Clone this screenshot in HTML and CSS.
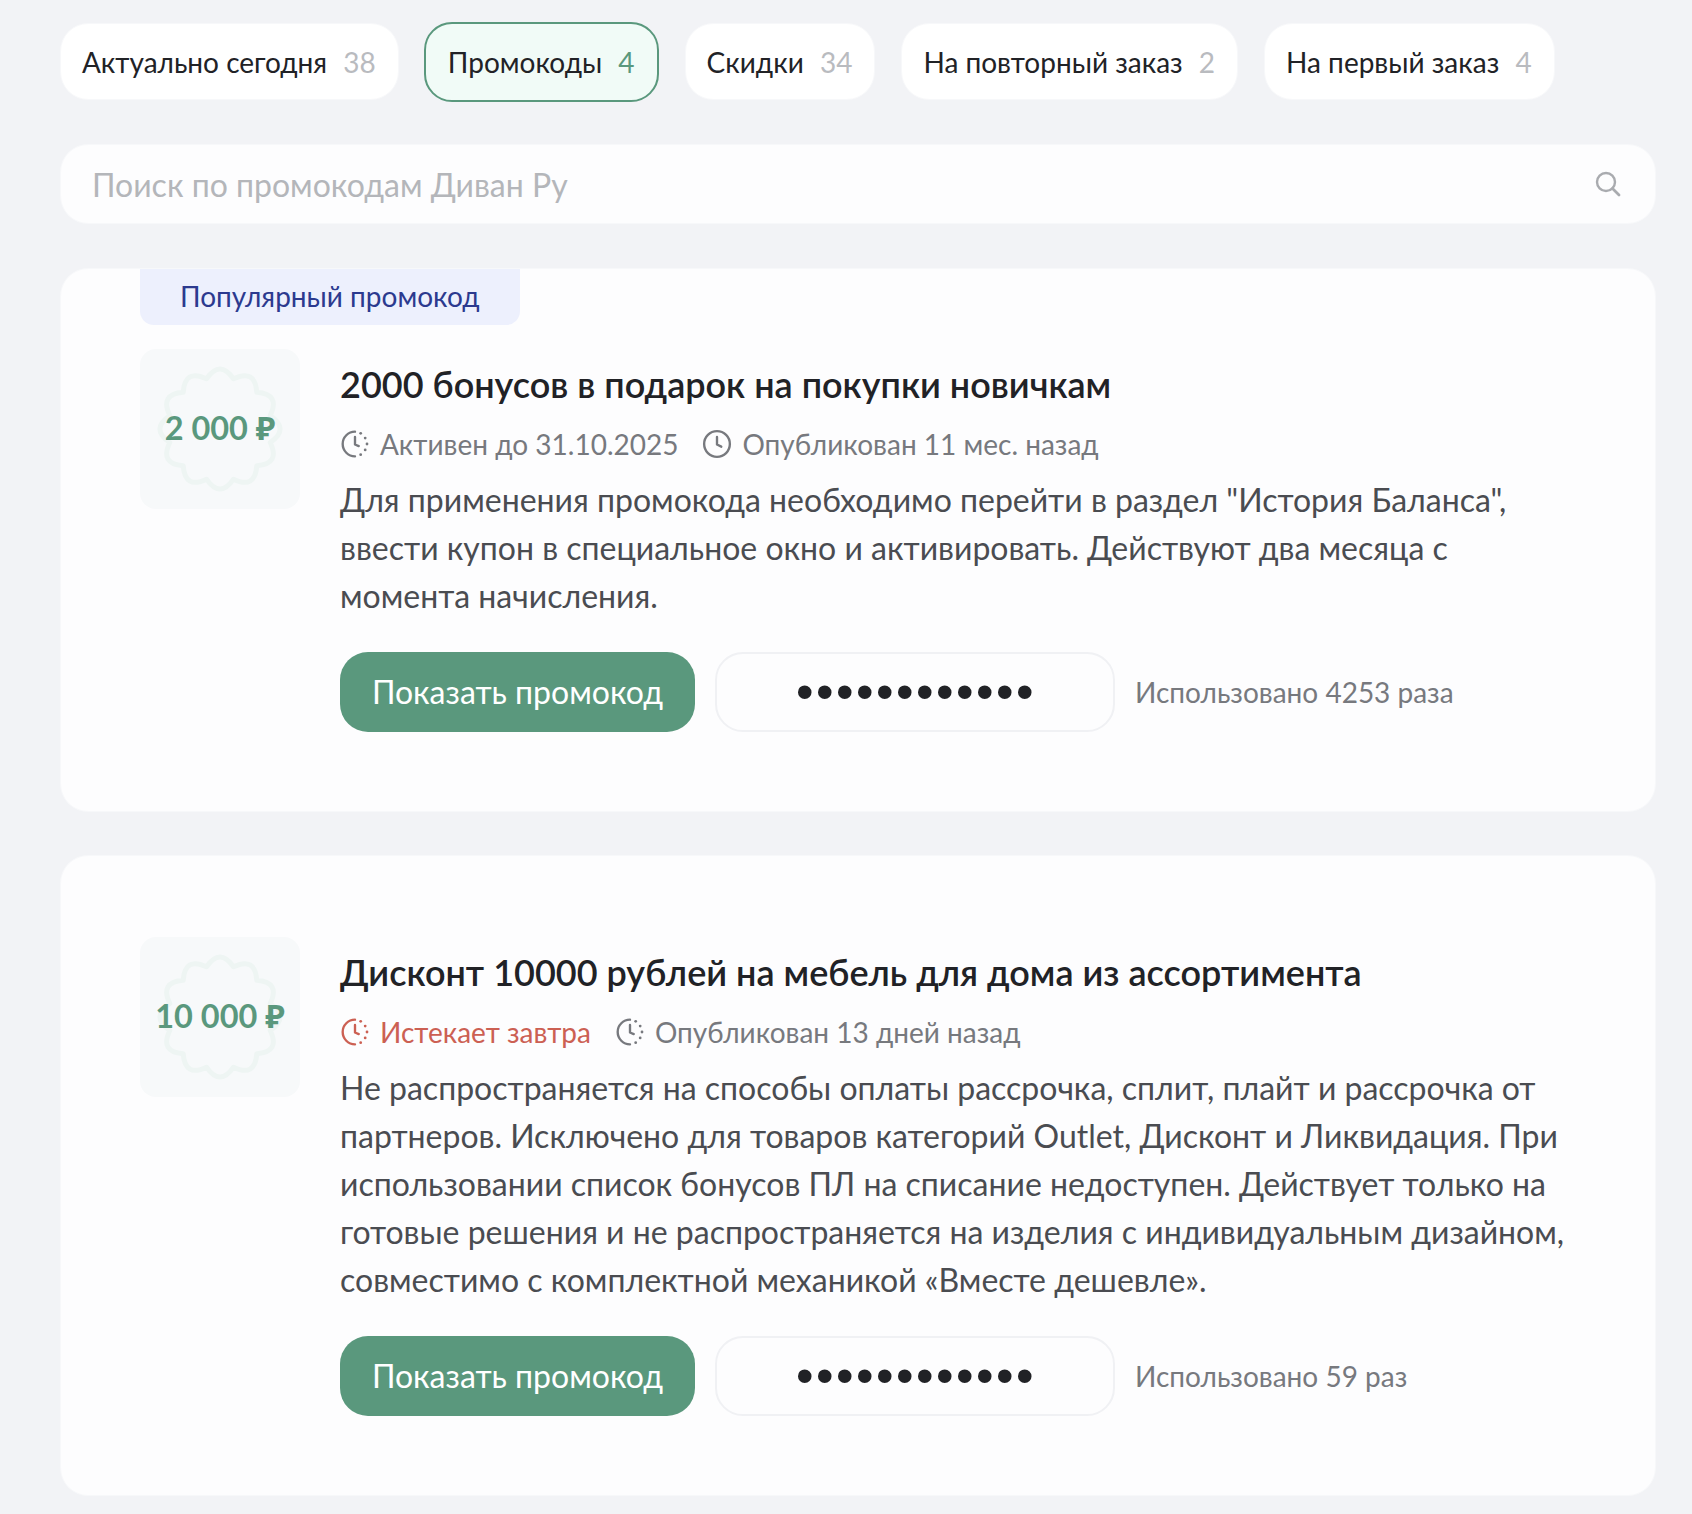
FILE: index.html
```html
<!DOCTYPE html>
<html lang="ru">
<head>
<meta charset="UTF-8">
<meta name="viewport" content="width=device-width, initial-scale=1.0">
<title>Промокоды Диван Ру</title>
<link rel="stylesheet" href="styles.css">
</head>
<body>
    <svg class="sprite" width="0" height="0">
        <symbol id="timer" viewBox="0 0 28 28">
            <path d="M14 2.500A11.500 11.500 0 0 0 14 25.500" fill="none" stroke="currentColor" stroke-width="2.200" stroke-linecap="round"/>
            <path d="M14 7.500V14.500L17.500 16" fill="none" stroke="currentColor" stroke-width="2.200" stroke-linecap="round" stroke-linejoin="round"/>
            <circle cx="19.300" cy="4" r="1.300" fill="currentColor"/>
            <circle cx="23.500" cy="8.500" r="1.300" fill="currentColor"/>
            <circle cx="25.200" cy="14" r="1.300" fill="currentColor"/>
            <circle cx="23.500" cy="19.500" r="1.300" fill="currentColor"/>
            <circle cx="19.300" cy="24" r="1.300" fill="currentColor"/>
        </symbol>
        <symbol id="clock" viewBox="0 0 28 28">
            <circle cx="14" cy="14" r="12" fill="none" stroke="currentColor" stroke-width="2.200"/>
            <path d="M14 7.500V14.500L18 16.500" fill="none" stroke="currentColor" stroke-width="2.200" stroke-linecap="round" stroke-linejoin="round"/>
        </symbol>
        <symbol id="badge" viewBox="0 0 160 160">
            <path d="M66.500 29.800Q80 10 93.500 29.800Q115 19.400 116.800 43.200Q140.600 45 130.200 66.500Q150 80 130.200 93.500Q140.600 115 116.800 116.800Q115 140.600 93.500 130.200Q80 150 66.500 130.200Q45 140.600 43.200 116.800Q19.400 115 29.800 93.500Q10 80 29.800 66.500Q19.400 45 43.200 43.200Q45 19.400 66.500 29.800Z" fill="none" stroke="#eef5f3" stroke-width="5" stroke-linejoin="round"/>
        </symbol>
    </svg>

    <nav class="tabs">
        <a class="tab">Актуально сегодня <span class="tab-count">38</span></a>
        <a class="tab tab-active">Промокоды <span class="tab-count">4</span></a>
        <a class="tab">Скидки <span class="tab-count">34</span></a>
        <a class="tab">На повторный заказ <span class="tab-count">2</span></a>
        <a class="tab">На первый заказ <span class="tab-count">4</span></a>
    </nav>

    <div class="search">
        <span class="search-text">Поиск по промокодам Диван Ру</span>
        <svg class="search-icon" width="28" height="28" viewBox="0 0 28 28">
            <circle cx="12" cy="12" r="9" fill="none" stroke="#a9abaf" stroke-width="2.400"/>
            <path d="M18.500 18.500L25 25" fill="none" stroke="#a9abaf" stroke-width="2.800" stroke-linecap="round"/>
        </svg>
    </div>

    <section class="card card-first">
        <div class="popular">Популярный промокод</div>
        <div class="card-row">
            <div class="coupon">
                <svg class="coupon-bg"><use href="#badge"/></svg>
                <span class="coupon-value">2 000 ₽</span>
            </div>
            <div class="card-body">
                <h2>2000 бонусов в подарок на покупки новичкам</h2>
                <div class="meta">
                    <span class="meta-item"><svg class="meta-icon"><use href="#timer"/></svg>Активен до 31.10.2025</span>
                    <span class="meta-item"><svg class="meta-icon"><use href="#clock"/></svg>Опубликован 11 мес. назад</span>
                </div>
                <p>Для применения промокода необходимо перейти в раздел "История Баланса", ввести купон в специальное окно и активировать. Действуют два месяца с момента начисления.</p>
                <div class="actions">
                    <button class="show-btn">Показать промокод</button>
                    <div class="code">••••••••••••</div>
                    <span class="used">Использовано 4253 раза</span>
                </div>
            </div>
        </div>
    </section>

    <section class="card card-second">
        <div class="card-row">
            <div class="coupon">
                <svg class="coupon-bg"><use href="#badge"/></svg>
                <span class="coupon-value">10 000 ₽</span>
            </div>
            <div class="card-body">
                <h2>Дисконт 10000 рублей на мебель для дома из ассортимента</h2>
                <div class="meta">
                    <span class="meta-item meta-red"><svg class="meta-icon"><use href="#timer"/></svg>Истекает завтра</span>
                    <span class="meta-item"><svg class="meta-icon"><use href="#timer"/></svg>Опубликован 13 дней назад</span>
                </div>
                <p>Не распространяется на способы оплаты рассрочка, сплит, плайт и рассрочка от партнеров. Исключено для товаров категорий Outlet, Дисконт и Ликвидация. При использовании список бонусов ПЛ на списание недоступен. Действует только на готовые решения и не распространяется на изделия с индивидуальным дизайном, совместимо с комплектной механикой «Вместе дешевле».</p>
                <div class="actions">
                    <button class="show-btn">Показать промокод</button>
                    <div class="code">••••••••••••</div>
                    <span class="used">Использовано 59 раз</span>
                </div>
            </div>
        </div>
    </section>
</body>
</html>
```

FILE: styles.css
```css
* {
    box-sizing: border-box;
}

body {
    margin: 0;
    padding: 23px 36px 0 60px;
    background-color: #f2f3f6;
    font-family: Lato, "Noto Sans", sans-serif;
    color: #212226;
}

.sprite {
    position: absolute;
}

.tabs {
    display: flex;
    align-items: flex-start;
    gap: 26px;
    height: 77px;
    margin-bottom: 44px;
}

.tab {
    display: block;
    height: 77px;
    padding: 0 22px 0 21px;
    border: 1px solid #f7f8fa;
    border-radius: 28px;
    background-color: #fff;
    font-size: 28px;
    line-height: 77px;
    white-space: nowrap;
}

.tab-count {
    margin-left: 9px;
    color: #b9bbbf;
}

.tab-active {
    border: 2px solid #5a987d;
    background-color: #f1fbf7;
    margin-top: -1px;
    margin-left: -1px;
    height: 80px;
    padding-left: 22px;
}

.tab-active .tab-count {
    color: #5a987d;
}

.search {
    display: flex;
    align-items: center;
    justify-content: space-between;
    height: 80px;
    padding: 0 33px 0 31px;
    border: 1px solid #f7f8fa;
    border-radius: 28px;
    background-color: #fdfdfe;
    margin-bottom: 44px;
}

.search-text {
    font-size: 32px;
    color: #b4b6ba;
}

.card {
    border: 1px solid #f7f8fa;
    border-radius: 28px;
    background-color: #fdfdfe;
    padding: 0 79px;
}

.card-first {
    height: 544px;
    margin-bottom: 43px;
}

.card-second {
    height: 641px;
    padding-top: 81px;
}

.popular {
    width: 380px;
    height: 56px;
    padding-left: 40px;
    border-radius: 0 0 14px 14px;
    background-color: #edf0fd;
    color: #2c3a8f;
    font-size: 28px;
    line-height: 55px;
    margin-bottom: 24px;
}

.card-row {
    display: flex;
    gap: 40px;
}

.coupon {
    position: relative;
    flex: none;
    display: flex;
    align-items: center;
    justify-content: center;
    width: 160px;
    height: 160px;
    padding-bottom: 4px;
    border-radius: 16px;
    background-color: #f7f9fa;
}

.coupon-bg {
    position: absolute;
    left: 0;
    top: 0;
    width: 160px;
    height: 160px;
}

.coupon-value {
    position: relative;
    color: #5a987d;
    font-size: 32.500px;
    font-weight: 700;
    white-space: nowrap;
}

.card-body {
    flex: 1;
}

h2 {
    margin: 0;
    font-size: 36px;
    font-weight: 600;
    line-height: 48px;
    padding-top: 11px;
}

.meta {
    display: flex;
    gap: 24px;
    margin-top: 16px;
    height: 40px;
    font-size: 28px;
    color: #77797e;
}

.meta-item {
    display: flex;
    align-items: center;
    gap: 10px;
}

.meta-icon {
    width: 30px;
    height: 30px;
}

.meta-red {
    color: #cc6053;
}

p {
    margin: 12px 0 0;
    font-size: 32px;
    line-height: 48px;
    color: #4a4c51;
}

.actions {
    display: flex;
    align-items: center;
    gap: 20px;
    margin-top: 32px;
}

.show-btn {
    width: 355px;
    height: 80px;
    padding-bottom: 3px;
    border: none;
    border-radius: 28px;
    background-color: #5a987d;
    color: #fff;
    font-family: inherit;
    font-size: 32px;
}

.code {
    width: 400px;
    height: 80px;
    padding-left: 2px;
    border: 2px solid #f0f1f4;
    border-radius: 28px;
    color: #212226;
    font-family: "Liberation Sans", sans-serif;
    font-size: 50px;
    letter-spacing: 2.500px;
    line-height: 76px;
    text-align: center;
}

.used {
    font-size: 28px;
    color: #77797e;
}
```
